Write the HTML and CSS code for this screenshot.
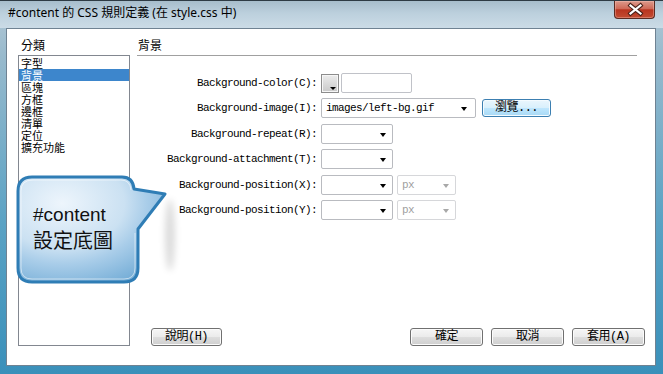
FILE: index.html
```html
<!DOCTYPE html>
<html lang="zh-Hant">
<head>
<meta charset="UTF-8" />
<title>#content 的 CSS 規則定義</title>
<link rel="stylesheet" href="styles.css">
</head>
<body>

<div class="window">
  <div class="titlebar">
    <span class="title">#content 的 CSS 規則定義 (在 style.css 中)</span>
    <div class="close-btn">
      <svg width="41" height="17" viewBox="0 0 41 17">
        <path d="M15.5 4.5 L25.5 12.5 M25.5 4.5 L15.5 12.5" stroke="#4a2018" stroke-width="4.2" stroke-linecap="square" fill="none"/>
        <path d="M15.5 4.5 L25.5 12.5 M25.5 4.5 L15.5 12.5" stroke="#ffffff" stroke-width="2.2" stroke-linecap="square" fill="none"/>
      </svg>
    </div>
  </div>

  <div class="client">
    <div class="category">
      <div class="group-label">分類</div>
      <ul class="category-list">
        <li>字型</li>
        <li class="selected">背景</li>
        <li>區塊</li>
        <li>方框</li>
        <li>邊框</li>
        <li>清單</li>
        <li>定位</li>
        <li>擴充功能</li>
      </ul>
    </div>

    <div class="panel">
      <div class="panel-title">背景</div>

      <div class="form">
        <div class="field-label">Background-color(C):</div>
        <div class="field">
          <div class="swatch"><span class="swatch-arrow"></span></div>
          <div class="text-input"></div>
        </div>

        <div class="field-label">Background-image(I):</div>
        <div class="field">
          <div class="combo combo-wide">images/left-bg.gif<span class="arrow"></span></div>
          <button class="btn btn-browse">瀏覽...</button>
        </div>

        <div class="field-label">Background-repeat(R):</div>
        <div class="field">
          <div class="combo"><span class="arrow"></span></div>
        </div>

        <div class="field-label">Background-attachment(T):</div>
        <div class="field">
          <div class="combo"><span class="arrow"></span></div>
        </div>

        <div class="field-label">Background-position(X):</div>
        <div class="field">
          <div class="combo"><span class="arrow"></span></div>
          <div class="combo combo-unit disabled">px<span class="arrow"></span></div>
        </div>

        <div class="field-label">Background-position(Y):</div>
        <div class="field">
          <div class="combo"><span class="arrow"></span></div>
          <div class="combo combo-unit disabled">px<span class="arrow"></span></div>
        </div>
      </div>

      <div class="actions">
        <button class="btn btn-help">說明(H)</button>
        <div class="actions-right">
          <button class="btn">確定</button>
          <button class="btn">取消</button>
          <button class="btn">套用(A)</button>
        </div>
      </div>
    </div>

    <!-- speech bubble laid over the dialog -->
    <div class="callout">
      <svg class="callout-shape" width="175" height="115" viewBox="0 0 175 115">
        <defs>
          <radialGradient id="bubbleFill" cx="0.3" cy="0.25" r="0.85">
            <stop offset="0" stop-color="#edf5fc"/>
            <stop offset="0.5" stop-color="#cbe1f2"/>
            <stop offset="0.68" stop-color="#a9cde9"/>
            <stop offset="1" stop-color="#76aed7"/>
          </radialGradient>
          <filter id="blur" x="-1" y="-1" width="3" height="3">
            <feGaussianBlur stdDeviation="3.5"/>
          </filter>
        </defs>
        <ellipse cx="154" cy="62" rx="5" ry="36" fill="#000" opacity="0.14" filter="url(#blur)"/>
        <path d="M16 4 H106 Q117 4 118 16 L149 21 L122 56 V95 Q122 109 108 109 H16 Q2 109 2 95 V18 Q2 4 16 4 Z"
              fill="url(#bubbleFill)" stroke="#2f7db5" stroke-width="3" stroke-linejoin="round"/>
        <path d="M17 7 H105 Q114 7 115 17 M119 60 V95 Q119 106 108 106 H16 Q5 106 5 95 V18 Q5 7 17 7"
              fill="none" stroke="#ffffff" stroke-opacity="0.55" stroke-width="1"/>
      </svg>
      <div class="callout-text">
        <div class="callout-id">#content</div>
        <div class="callout-note">設定底圖</div>
      </div>
    </div>
  </div>
</div>

</body>
</html>
```

FILE: styles.css
```css
body {
  margin: 0;
  background: #1f2a31;
}

.window {
  width: 663px;
  height: 374px;
  display: flex;
  flex-direction: column;
  background: linear-gradient(180deg, #b5c9d6 0%, #98bacd 15%, #5aa2c4 60%, #3a90ba 100%);
  box-sizing: border-box;
}

/* Title bar */
.titlebar {
  height: 28px;
  display: flex;
  align-items: flex-start;
  border-top: 1px solid #2e3b44;
  box-sizing: border-box;
  background: linear-gradient(180deg, #a7bdcb 0%, #bcd0dd 45%, #cbdbe6 100%);
}

.title {
  padding-left: 8px;
  line-height: 24px;
  font-family: "Noto Sans", "Noto Sans CJK TC", sans-serif;
  font-size: 12px;
  color: #000;
}

.close-btn {
  margin-left: auto;
  margin-right: 8px;
  width: 41px;
  height: 18px;
  box-sizing: border-box;
  border: 1px solid #5b2b22;
  border-top: none;
  border-radius: 0 0 4px 4px;
  background: linear-gradient(180deg, #dc9a8c 0%, #cf6a58 45%, #b8341f 52%, #c24c32 100%);
  box-shadow: inset 0 0 0 1px rgba(255, 210, 200, 0.35);
}

.close-btn svg {
  display: block;
}

/* Client area */
.client {
  position: relative;
  display: flex;
  gap: 7px;
  width: 650px;
  height: 338px;
  margin-left: 6px;
  padding: 10px 10px 19px 11px;
  box-sizing: border-box;
  background: #fff;
  border: 1px solid #6f8292;
  font-family: "Noto Sans CJK TC", sans-serif;
  font-size: 12px;
  color: #000;
}

.category {
  width: 112px;
  display: flex;
  flex-direction: column;
}

.group-label {
  line-height: 12px;
  height: 12px;
  margin-bottom: 4px;
  padding-left: 3px;
}

.category-list {
  flex: 1;
  margin: 0;
  padding: 1px 0 0 0;
  list-style: none;
  border: 1px solid #828790;
}

.category-list li {
  height: 12px;
  line-height: 12px;
  font-size: 11px;
  padding-left: 2px;
}

.category-list li.selected {
  background: #3d86cc;
  color: #fff;
}

/* Right panel */
.panel {
  flex: 1;
  display: flex;
  flex-direction: column;
}

.panel-title {
  margin-right: 8px;
  padding: 0 0 4px 1px;
  line-height: 12px;
  border-bottom: 1px solid #a0a0a0;
}

.form {
  margin-top: 17px;
  display: grid;
  grid-template-columns: 180px auto;
  grid-auto-rows: 20px;
  column-gap: 4px;
  row-gap: 5.4px;
  font-family: "Liberation Mono", "Noto Sans CJK TC", monospace;
  font-size: 11px;
  letter-spacing: -0.6px;
}

.field-label {
  text-align: right;
  line-height: 20px;
  white-space: nowrap;
}

.field {
  display: flex;
  align-items: center;
}

.swatch {
  position: relative;
  width: 18px;
  height: 19px;
  box-sizing: border-box;
  border: 1px solid #8c8c8c;
  background: linear-gradient(180deg, #ececec, #c9c9c9);
  box-shadow: inset 0 0 0 1px #f6f6f6;
}

.swatch-arrow {
  position: absolute;
  right: 2px;
  bottom: 2px;
  border-left: 3px solid transparent;
  border-right: 3px solid transparent;
  border-top: 3px solid #000;
}

.text-input {
  width: 71px;
  height: 20px;
  margin-left: 2px;
  box-sizing: border-box;
  border: 1px solid #c0c2c8;
  border-radius: 2px;
  background: #fff;
}

.combo {
  position: relative;
  width: 72px;
  height: 20px;
  box-sizing: border-box;
  padding-left: 4px;
  line-height: 18px;
  border: 1px solid #b9bbc0;
  border-radius: 2px;
  background: #fff;
  white-space: nowrap;
}

.combo-wide {
  width: 155px;
}

.combo-unit {
  width: 59px;
  margin-left: 4px;
}

.combo .arrow {
  position: absolute;
  right: 6px;
  top: 8px;
  border-left: 3.5px solid transparent;
  border-right: 3.5px solid transparent;
  border-top: 4px solid #000;
}

.combo-wide .arrow {
  right: 8px;
}

.combo.disabled {
  border-color: #d6d7da;
  color: #a0a0a0;
}

.combo.disabled .arrow {
  border-top-color: #a8a8a8;
}

/* Buttons */
.btn {
  height: 18px;
  width: 73px;
  padding: 0;
  box-sizing: border-box;
  border: 1px solid #707070;
  border-radius: 3px;
  background: linear-gradient(180deg, #f6f6f6 0%, #ebebeb 48%, #dddddd 52%, #cfcfcf 100%);
  box-shadow: inset 0 0 0 1px #fbfbfb;
  font-family: "Liberation Mono", "Noto Sans CJK TC", monospace;
  font-size: 12px;
  letter-spacing: -0.5px;
  line-height: 16px;
  color: #000;
}

.btn-browse {
  width: 69px;
  margin-left: 6px;
  border-color: #3c7fb1;
  background: linear-gradient(180deg, #eaf6fd 0%, #d9f0fc 48%, #bee6fd 52%, #a7d9f5 100%);
  box-shadow: inset 0 0 0 1px #f4fbff;
}

.actions {
  margin-top: auto;
  display: flex;
}

.btn-help {
  width: 71px;
  margin-left: 14px;
}

.actions-right {
  margin-left: auto;
  display: flex;
  gap: 8px;
}

/* Speech bubble overlay */
.callout {
  position: absolute;
  left: 9px;
  top: 144px;
  width: 175px;
  height: 115px;
}

.callout-shape {
  position: absolute;
  left: 0;
  top: 0;
}

.callout-text {
  position: relative;
  padding: 30px 0 0 17px;
  color: #111;
}

.callout-id {
  font-family: "Liberation Sans", Arial, sans-serif;
  font-size: 19px;
  line-height: 24px;
}

.callout-note {
  font-family: "Noto Sans CJK TC", sans-serif;
  font-size: 20px;
  line-height: 26px;
}
```
